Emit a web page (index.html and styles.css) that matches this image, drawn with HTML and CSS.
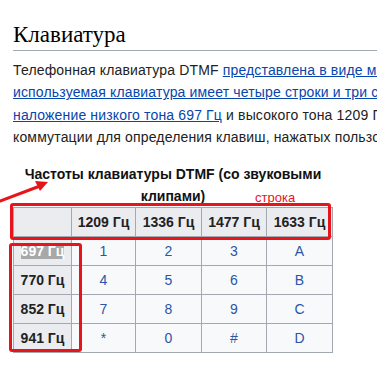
FILE: index.html
```html
<!DOCTYPE html>
<html lang="ru">
<head>
<meta charset="utf-8">
<link rel="stylesheet" href="styles.css">
</head>
<body>
<div class="content">
  <h2 class="heading">Клавиатура</h2>
  <p class="para">Телефонная клавиатура DTMF <a href="#">представлена в виде матрицы 4×4, но наиболее часто</a><br><a href="#">используемая клавиатура имеет четыре строки и три столбца</a><br><a href="#">наложение низкого тона 697 Гц</a> и высокого тона 1209 Гц. Приёмник<br>коммутации для определения клавиш, нажатых пользователем</p>
  <div class="figure">
    <table class="dtmf">
      <caption>Частоты клавиатуры DTMF (со звуковыми клипами)</caption>
      <tr>
        <th class="corner"></th>
        <th>1209 Гц</th>
        <th>1336 Гц</th>
        <th>1477 Гц</th>
        <th>1633 Гц</th>
      </tr>
      <tr>
        <th><span class="sel">697 Гц</span></th>
        <td><a href="#">1</a></td><td><a href="#">2</a></td><td><a href="#">3</a></td><td><a href="#">A</a></td>
      </tr>
      <tr>
        <th>770 Гц</th>
        <td><a href="#">4</a></td><td><a href="#">5</a></td><td><a href="#">6</a></td><td><a href="#">B</a></td>
      </tr>
      <tr>
        <th>852 Гц</th>
        <td><a href="#">7</a></td><td><a href="#">8</a></td><td><a href="#">9</a></td><td><a href="#">C</a></td>
      </tr>
      <tr>
        <th>941 Гц</th>
        <td><a href="#">*</a></td><td><a href="#">0</a></td><td><a href="#">#</a></td><td><a href="#">D</a></td>
      </tr>
    </table>
    <span class="note">строка</span>
    <div class="box box-row"></div>
    <div class="box box-col"></div>
    <svg class="arrow" width="52" height="26" viewBox="0 0 52 26">
      <line x1="0" y1="23" x2="40" y2="8" stroke="#e8141c" stroke-width="3" stroke-linecap="round"/>
      <polygon points="48,4 35,3 40,13" fill="#e8141c"/>
    </svg>
  </div>
</div>
</body>
</html>
```

FILE: styles.css
```css
html, body {
  margin: 0;
  padding: 0;
  background: #ffffff;
  overflow: hidden;
}

.content {
  padding: 0 0 0 13px;
  width: 640px;
  font-family: "Liberation Sans", Arial, sans-serif;
  color: #222222;
}

.heading {
  font-family: "Liberation Serif", "Times New Roman", serif;
  font-weight: normal;
  font-size: 23px;
  line-height: 30px;
  color: #000000;
  margin: 20px 0 0 0;
  padding: 0;
  border-bottom: 1px solid #a2a9b1;
}

.para {
  margin: 8px 0 0 0;
  font-size: 14px;
  letter-spacing: 0.15px;
  line-height: 22.4px;
  white-space: nowrap;
}

.para a {
  color: #0645ad;
  text-decoration: underline;
}

.figure {
  position: relative;
  margin-top: 14px;
  width: 320px;
}

.dtmf {
  border-collapse: collapse;
  width: 320px;
  font-size: 14px;
  background: #f8f9fa;
  color: #222222;
}

.dtmf caption {
  font-weight: bold;
  line-height: 22px;
  padding-bottom: 0;
  color: #111111;
}

.dtmf th,
.dtmf td {
  border: 1px solid #a2a9b1;
  text-align: center;
  padding: 4px 4px;
  line-height: 20px;
  height: 20px;
}

.dtmf th {
  background: #eaecf0;
  font-weight: bold;
}

.dtmf tr:first-child th { height: 19px; }

.dtmf th:first-child { width: 49px; }
.dtmf tr:first-child th:nth-child(2) { width: 55px; }
.dtmf tr:first-child th:nth-child(3) { width: 57px; }
.dtmf tr:first-child th:nth-child(4) { width: 56px; }

.dtmf td a {
  color: #2a55a8;
  text-decoration: none;
}

.sel {
  background: #a8a8a8;
  color: #ffffff;
}

.note {
  position: absolute;
  left: 242px;
  top: 27px;
  font-size: 13px;
  line-height: 16px;
  color: #e8141c;
}

.box {
  position: absolute;
  border: 3px solid #e8141c;
  border-radius: 3px;
}

.box-row {
  left: -3px;
  top: 40px;
  width: 315px;
  height: 31px;
}

.box-col {
  left: -4px;
  top: 80px;
  width: 67px;
  height: 103px;
}

.arrow {
  position: absolute;
  left: -13px;
  top: 15px;
}
```
